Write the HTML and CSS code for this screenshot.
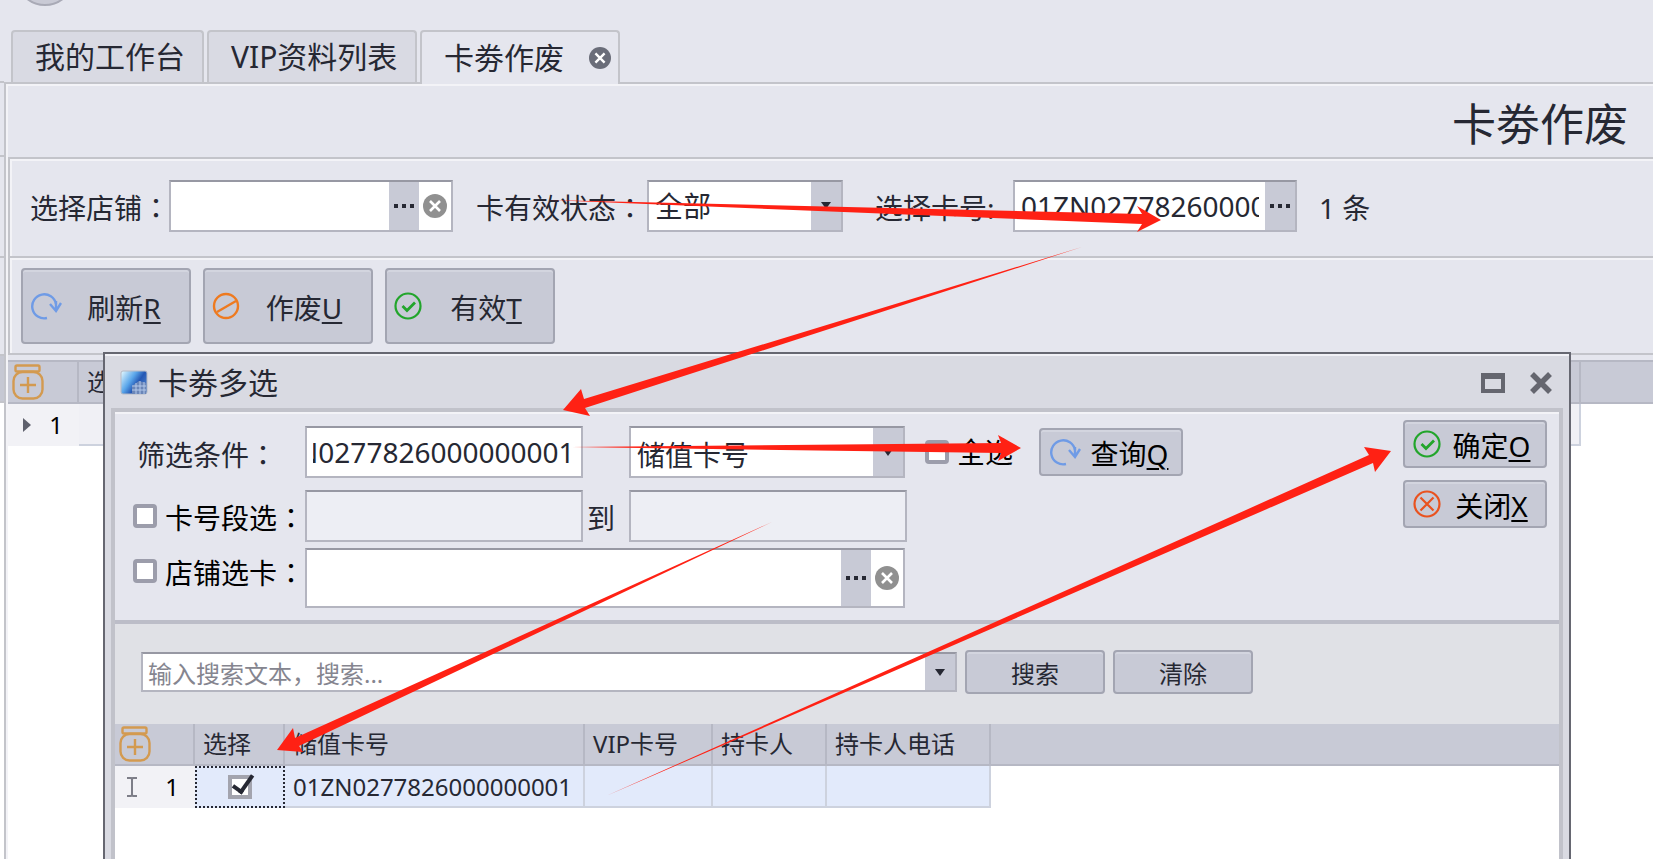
FILE: index.html
```html
<!DOCTYPE html>
<html lang="zh-CN">
  <head>
    <meta charset="UTF-8" />
    <meta name="viewport" content="width=device-width, initial-scale=1.0" />
    <title>卡劵作废</title>
    <link rel="stylesheet" href="styles.css">
  </head>
  <body>
    <!-- 公用图标 -->
    <svg class="defs" width="0" height="0">
      <symbol id="i-refresh" viewBox="0 0 32 28">
        <path d="M17 26A12 12 0 1 1 26 12" fill="none" stroke="#6f9be6" stroke-width="2.4" />
        <path d="M20 12l6 7 5-8M26 9v9" fill="none" stroke="#6f9be6" stroke-width="2.4" />
      </symbol>
      <symbol id="i-ban" viewBox="0 0 28 28">
        <circle cx="14" cy="14" r="12" fill="none" stroke="#ee7a20" stroke-width="2.4" />
        <path d="M5 20L24 9" stroke="#ee7a20" stroke-width="2.4" />
      </symbol>
      <symbol id="i-ok" viewBox="0 0 28 28">
        <circle cx="14" cy="14" r="12.5" fill="none" stroke="#22a52b" stroke-width="2.2" />
        <path d="M8.500 14l4.500 4.500 8-8" fill="none" stroke="#22a52b" stroke-width="2.8" />
      </symbol>
      <symbol id="i-no" viewBox="0 0 28 28">
        <circle cx="14" cy="14" r="12.500" fill="none" stroke="#e9521f" stroke-width="2.2" />
        <path d="M7.500 7.500l13 13M20.500 7.500l-13 13" stroke="#e9521f" stroke-width="2.2" />
      </symbol>
      <symbol id="i-clear" viewBox="0 0 24 24">
        <circle cx="12" cy="12" r="12" fill="currentColor" />
        <path d="M7 7l10 10M17 7L7 17" stroke="#fff" stroke-width="2.6" />
      </symbol>
      <symbol id="i-jar" viewBox="0 0 32 36">
        <g fill="none" stroke="#d39a50" stroke-width="2.4">
          <rect x="3.500" y="1.500" width="24" height="6" rx="1.500" />
          <rect x="1.500" y="8" width="29" height="26.500" rx="9" />
          <path d="M16 13v16M8 21h16" />
        </g>
      </symbol>
    </svg>

    <div class="page">
      <div class="gutter">
        <i class="g-tabs"></i><i class="g-title"></i><i class="g-filter"></i><i class="g-tools"></i><i class="g-head"></i><i class="g-body"></i>
      </div>

      <div class="main">
        <nav class="tabs">
          <span class="orb"></span>
          <button class="tab tab-home">我的工作台</button>
          <button class="tab tab-vip">VIP资料列表</button>
          <button class="tab tab-card active">卡劵作废
            <svg class="tab-close" width="22" height="22"><use href="#i-clear" /></svg>
          </button>
        </nav>

        <section class="pane">
          <h1 class="pane-title">卡劵作废</h1>

          <!-- 查询条件 -->
          <form class="filter">
            <label class="lb-shop" for="shop">选择店铺<span class="colon" lang="zh-TW">：</span></label>
            <div class="field f-shop">
              <input type="text" id="shop" />
              <button type="button" class="dots" aria-label="选择店铺"><i></i><i></i><i></i></button>
              <button type="button" class="clear" aria-label="清除店铺"><svg width="24" height="24"><use href="#i-clear" /></svg></button>
            </div>
            <label class="lb-state" for="state">卡有效状态<span class="colon" lang="zh-TW">：</span></label>
            <div class="field f-state">
              <select id="state"><option>全部</option></select><span class="drop"></span>
            </div>
            <label class="lb-card" for="card">选择卡号:</label>
            <div class="field f-card">
              <input type="text" id="card" value="01ZN0277826000000001" />
              <button type="button" class="dots" aria-label="选择卡号"><i></i><i></i><i></i></button>
            </div>
            <span class="count">1 条</span>
          </form>

          <div class="tools">
            <button class="btn big"><svg width="32" height="28"><use href="#i-refresh" /></svg><span>刷新<u>R</u></span></button>
            <button class="btn big"><svg width="28" height="28"><use href="#i-ban" /></svg><span>作废<u>U</u></span></button>
            <button class="btn big"><svg width="28" height="28"><use href="#i-ok" /></svg><span>有效<u>T</u></span></button>
          </div>

          <table class="grid main-grid">
            <thead>
              <tr>
                <th class="m-no"><svg width="32" height="36"><use href="#i-jar" /></svg></th>
                <th class="m-cell">选择</th>
                <th></th>
              </tr>
            </thead>
            <tbody>
              <tr>
                <td class="row-no"><div class="no"><i class="cursor"></i>1</div></td>
                <td class="m-val"></td>
                <td class="blank"></td>
              </tr>
            </tbody>
          </table>
        </section>
      </div>

      <!-- 卡劵多选窗口 -->
      <div class="dialog" role="dialog" aria-labelledby="dlg-title">
        <header class="dlg-bar">
          <svg width="28" height="26" viewBox="0 0 28 26">
            <defs>
              <linearGradient id="app" x1="0" y1="0" x2="1" y2="0.600">
                <stop offset="0" stop-color="#e8fbff" />
                <stop offset="0.450" stop-color="#5aa6ea" />
                <stop offset="0.700" stop-color="#2457b4" />
                <stop offset="1" stop-color="#4a7cc8" />
              </linearGradient>
            </defs>
            <rect x="1" y="1" width="26" height="23" rx="2" fill="url(#app)" stroke="#b5b9c4" />
            <path d="M12 24V16l7-5 7 2v11z" fill="#6b86b8" />
            <path d="M12 16h14M12 20h14M16 13v11M20 11v13M24 12v12" stroke="#b3c8ea" />
          </svg>
          <h2 id="dlg-title">卡劵多选</h2>
          <button class="win" aria-label="最大化"><svg width="24" height="20"><path d="M2 4h20v14H2z" fill="none" stroke="#65666f" stroke-width="4" /><path d="M0 3h24" stroke="#65666f" stroke-width="6" /></svg></button>
          <button class="win" aria-label="关闭"><svg width="24" height="22"><path d="M3 2l18 18M21 2L3 20" stroke="#65666f" stroke-width="5.500" /></svg></button>
        </header>

        <div class="dlg-body">
          <form class="cond">
            <div class="cond-rows">
              <div class="row">
                <label class="lb lb-key" for="key">筛选条件<span class="colon" lang="zh-TW">：</span></label>
                <div class="field f-key"><input type="text" id="key" value="01ZN0277826000000001" /></div>
                <div class="field f-kind">
                  <select id="kind" aria-label="条件类型"><option>储值卡号</option></select><span class="drop"></span>
                </div>
                <label class="check"><input type="checkbox" />全选</label>
                <button type="button" class="btn small"><svg width="32" height="28"><use href="#i-refresh" /></svg><span>查询<u>Q</u></span></button>
              </div>
              <div class="row">
                <label class="lb check"><input type="checkbox" /><span>卡号段选<span class="colon" lang="zh-TW">：</span></span></label>
                <div class="field f-key off"><input type="text" aria-label="起始卡号" disabled /></div>
                <span class="to">到</span>
                <div class="field f-to off"><input type="text" aria-label="结束卡号" disabled /></div>
              </div>
              <div class="row last">
                <label class="lb check"><input type="checkbox" /><span>店铺选卡<span class="colon" lang="zh-TW">：</span></span></label>
                <div class="field f-pick">
                  <input type="text" aria-label="店铺" />
                  <button type="button" class="dots" aria-label="选择店铺"><i></i><i></i><i></i></button>
                  <button type="button" class="clear" aria-label="清除店铺"><svg width="24" height="24"><use href="#i-clear" /></svg></button>
                </div>
              </div>
            </div>
            <div class="acts">
              <button type="button" class="btn small"><svg width="28" height="28"><use href="#i-ok" /></svg><span>确定<u>O</u></span></button>
              <button type="button" class="btn small"><svg width="28" height="28"><use href="#i-no" /></svg><span>关闭<u>X</u></span></button>
            </div>
          </form>

          <div class="search">
            <div class="field f-search">
              <input type="text" aria-label="搜索" placeholder="输入搜索文本，搜索..." />
              <span class="drop"></span>
            </div>
            <button class="btn mini">搜索</button>
            <button class="btn mini">清除</button>
          </div>

          <table class="grid card-grid">
            <thead>
              <tr>
                <th class="c-no"><svg width="32" height="36"><use href="#i-jar" /></svg></th>
                <th class="c-sel">选择</th>
                <th class="c-card">储值卡号</th>
                <th class="c-vip">VIP卡号</th>
                <th class="c-name">持卡人</th>
                <th class="c-tel">持卡人电话</th>
                <th></th>
              </tr>
            </thead>
            <tbody>
              <tr>
                <td class="row-no">
                  <div class="no">
                    <svg width="12" height="20"><path d="M1 1h4l1 1 1-1h4M6 2v16M1 19h4l1-1 1 1h4" fill="none" stroke="#7d7e88" stroke-width="2" /></svg>1
                  </div>
                </td>
                <td class="sel focus"><input type="checkbox" aria-label="选择" checked /></td>
                <td class="sel">01ZN0277826000000001</td>
                <td class="sel"></td>
                <td class="sel"></td>
                <td class="sel"></td>
                <td class="blank"></td>
              </tr>
            </tbody>
          </table>
        </div>
      </div>

      <!-- 操作步骤箭头 -->
      <svg class="arrows" width="1653" height="859">
        <path d="M548 200L1142 214 1137 206 1161 220 1137 232 1142 224z" />
        <path d="M1082 247L584 399 581 389 563 410 590 416 585 408z" />
        <path d="M572 447L1001 443 998 435 1021 448 998 461 1001 453z" />
        <path d="M772 522L295 738 293 728 277 750 303 752 299 746z" />
        <path d="M606 796L1369 455 1364 447 1391 451 1375 472 1373 463z" />
      </svg>
    </div>

    <script>
      // 筛选框光标停在末尾，只显示卡号后半段
      const key = document.getElementById("key");
      key.scrollLeft = key.scrollWidth;
    </script>
  </body>
</html>
```

FILE: styles.css
```css
* {
  box-sizing: border-box;
}
body {
  margin: 0;
  font-family: "Noto Sans", "Noto Sans CJK SC", sans-serif;
  font-size: 28px;
  line-height: 32px;
  color: #262833;
  background: #e5e6ee;
}
button,
input,
select {
  font: inherit;
  color: inherit;
  margin: 0;
}
button {
  padding: 0;
  border: 0;
  background: none;
}
.defs {
  position: absolute;
}
/* 冒号居中显示 */
.colon {
  font-family: "Noto Sans CJK TC", sans-serif;
  line-height: 1;
}
.page {
  position: relative;
  display: flex;
  height: 100vh;
  min-height: 820px;
  overflow: hidden;
}

/* 左侧窗口边缘 */
.gutter {
  width: 4px;
  flex: none;
  display: flex;
  flex-direction: column;
}
.gutter i {
  border-bottom: 2px solid #c3c4ca;
}
.g-tabs {
  height: 83px;
}
.g-title {
  height: 74px;
}
.g-filter {
  height: 101px;
}
.g-tools {
  height: 98px;
}
.g-head {
  height: 47px;
  background: #c6c8d3;
}
.gutter .g-body {
  flex: 1;
  background: #fff;
  border: 0;
}
.main {
  flex: 1;
  min-width: 0;
  display: flex;
  flex-direction: column;
}

/* 标签页 */
.tabs {
  position: relative;
  display: flex;
  align-items: flex-end;
  gap: 3px;
  height: 82px;
  padding-left: 7px;
  flex: none;
}
.orb {
  position: absolute;
  left: 11px;
  top: -54px;
  width: 60px;
  height: 60px;
  border: 2px solid #a9aab6;
  border-radius: 50%;
  background: #c9cad5;
}
.tab {
  height: 52px;
  padding-left: 22px;
  border: 2px solid #c3c4ca;
  border-bottom: 0;
  border-radius: 4px 4px 0 0;
  background: #d9dae3;
  font-size: 30px;
  text-align: left;
  white-space: nowrap;
}
.tab-home {
  width: 193px;
}
.tab-vip {
  width: 210px;
}
.tab-card {
  width: 200px;
}
.tab.active {
  position: relative;
  z-index: 1;
  height: 54px;
  margin-bottom: -2px;
  display: flex;
  align-items: center;
  justify-content: space-between;
  padding-right: 7px;
  background: #e5e6ee;
}
.tab-close {
  color: #6a6d79;
}

.pane {
  flex: 1;
  display: flex;
  flex-direction: column;
  border-top: 2px solid #c3c4ca;
  border-left: 2px solid #c3c4ca;
  box-shadow: inset 2px 2px #f3f3f7;
}
.pane-title {
  height: 73px;
  margin: 0;
  padding: 18px 25px 0 0;
  text-align: right;
  font-size: 44px;
  font-weight: 400;
  line-height: 44px;
}
.filter,
.tools {
  display: flex;
  margin-left: 2px;
  border-top: 2px solid #c3c4ca;
  border-left: 2px solid #c3c4ca;
  box-shadow: inset 2px 2px #f3f3f7;
}
.filter {
  height: 99px;
  align-items: center;
  padding: 0 0 4px 20px;
  white-space: nowrap;
}
.filter label,
.count {
  padding-top: 4px;
}
.lb-shop {
  width: 139px;
}
.lb-state {
  width: 171px;
  margin-left: 23px;
}
.lb-card {
  width: 138px;
  margin-left: 32px;
}
.count {
  margin-left: 22px;
}

/* 输入框 */
.field {
  display: flex;
  flex: none;
  height: 52px;
  border: 2px solid #b4b5c0;
  border-top-color: #9798a3;
  background: #fff;
}
.field input,
.field select {
  flex: 1;
  min-width: 0;
  padding: 0 6px;
  border: 0;
  outline: 0;
  background: none;
  appearance: none;
}
.f-shop {
  width: 284px;
}
.f-state {
  width: 196px;
}
.f-card {
  width: 284px;
}
.dots {
  width: 30px;
  display: flex;
  align-items: center;
  justify-content: center;
  gap: 4px;
  background: #c8cad6;
}
.dots i {
  width: 4px;
  height: 4px;
  background: #262833;
}
.clear {
  width: 32px;
  color: #909090;
}
.clear svg,
.btn svg,
.win svg,
.grid svg {
  display: block;
}
.clear svg {
  margin: 0 auto;
}
.drop {
  width: 30px;
  display: flex;
  align-items: center;
  justify-content: center;
  background: #c8cad6;
}
.drop::after {
  content: "";
  border: 5px solid transparent;
  border-top: 7px solid #262833;
  border-bottom: 0;
}

/* 按钮 */
.btn {
  display: flex;
  align-items: center;
  flex: none;
  border: 2px solid #a3a5b2;
  border-radius: 4px;
  background: #c8cad6;
  box-shadow: inset 0 2px #d3d5df;
  white-space: nowrap;
}
.btn u {
  text-underline-offset: 3px;
  text-decoration-thickness: 2px;
}
.btn span {
  flex: 1;
  padding: 4px 3px 0 0;
  text-align: center;
}
.btn.big {
  width: 170px;
  height: 76px;
  padding-left: 7px;
}
.btn.small {
  width: 144px;
  height: 48px;
  padding-left: 8px;
  color: #000;
}
.btn.mini {
  width: 140px;
  height: 44px;
  justify-content: center;
  padding-top: 4px;
  font-size: 24px;
}
.tools {
  gap: 12px;
  height: 99px;
  padding: 10px 0 0 11px;
  border-bottom: 2px solid #c3c4ca;
}

/* 表格 */
.grid {
  width: 100%;
  table-layout: fixed;
  border-collapse: separate;
  border-spacing: 0;
  font-size: 24px;
}
.grid th {
  height: 42px;
  padding: 0 0 0 8px;
  border-right: 2px solid #b6b8c4;
  border-bottom: 2px solid #b6b8c4;
  background: #c8cad6;
  font-weight: 400;
  text-align: left;
  white-space: nowrap;
}
.grid th:first-child {
  padding-left: 4px;
}
.grid th:last-child {
  border-right: 0;
}
.grid td {
  height: 42px;
  padding: 2px 0 0 8px;
  border-right: 2px solid #cdd2de;
  border-bottom: 2px solid #cdd2de;
}
.grid .row-no {
  padding: 2px 0 0;
  border-color: #f2f2f6;
  background: #f2f2f6;
  color: #000;
}
.grid .blank {
  border: 0;
}
.no {
  display: flex;
  align-items: center;
  justify-content: space-between;
  padding: 0 14px 0 11px;
}
.main-grid {
  margin: 5px 0 0 2px;
  width: auto;
  border-top: 2px solid #b6b8c4;
  background: #fff;
}
.pane::after {
  content: "";
  flex: 1;
  margin-left: 2px;
  background: #fff;
}
.m-no {
  width: 71px;
}
.m-cell {
  width: 1502px;
}
.grid .m-val {
  background: #f0f0f5;
}
.cursor {
  margin-left: 4px;
  border: 7px solid transparent;
  border-left: 8px solid #5f616d;
  border-right: 0;
}

/* 弹出窗口 */
.dialog {
  position: absolute;
  top: 352px;
  left: 103px;
  right: 82px;
  bottom: 0;
  display: flex;
  flex-direction: column;
  padding: 0 6px;
  border: 2px solid #666771;
  border-bottom: 0;
  background: #d9dae2;
  box-shadow: inset 0 2px #f1f1f6;
}
.dlg-bar {
  height: 54px;
  flex: none;
  display: flex;
  align-items: center;
  padding: 4px 10px 0 9px;
}
.dlg-bar h2 {
  flex: 1;
  margin: 0 0 0 10px;
  font-size: 30px;
  font-weight: 400;
}
.win {
  margin-left: 24px;
}
.dlg-body {
  flex: 1;
  border: 4px solid #c1c2ca;
  border-bottom: 0;
  background: #fff;
}
.cond {
  display: flex;
  justify-content: space-between;
  height: 212px;
  padding: 6px 12px 0 18px;
  border-bottom: 4px solid #bcbdc8;
  background: #e5e6ee;
  box-shadow: inset 0 2px #f3f3f7;
}
.cond-rows {
  padding-top: 8px;
}
.row {
  display: flex;
  align-items: center;
  height: 52px;
  margin-bottom: 12px;
}
.row.last {
  height: 60px;
  margin-top: -6px;
}
.lb {
  width: 172px;
  padding-left: 4px;
  white-space: nowrap;
}
.lb-key {
  padding-top: 6px;
}
.check {
  display: flex;
  align-items: center;
  gap: 8px;
  color: #000;
}
.lb.check {
  padding-left: 0;
}
.lb.check > span {
  padding-top: 4px;
}
.last .lb {
  margin-bottom: 14px;
}
.check input {
  flex: none;
  width: 24px;
  height: 24px;
  border: 4px solid #9c9dab;
  border-radius: 4px;
  background: #fff;
  appearance: none;
}
.f-key,
.f-to {
  width: 278px;
}
.f-kind {
  width: 276px;
  margin: 0 20px 0 46px;
}
.f-kind select {
  padding-top: 6px;
}
.f-pick {
  width: 600px;
  height: 60px;
}
.off {
  background: #edeef4;
}
.to {
  width: 46px;
  padding: 4px 0 0 4px;
}
.row .btn {
  margin-left: 26px;
}
.acts {
  display: flex;
  flex-direction: column;
  gap: 12px;
  padding-top: 2px;
}
.search {
  display: flex;
  align-items: center;
  gap: 8px;
  height: 100px;
  padding: 0 0 4px 26px;
  background: #e0e1e6;
  font-size: 24px;
}
.f-search {
  width: 816px;
  height: 40px;
}
.f-search input {
  padding: 4px 5px 0;
}
.f-search input::placeholder {
  color: #85858f;
  opacity: 1;
}
.c-no {
  width: 80px;
}
.c-sel {
  width: 90px;
}
.c-card {
  width: 300px;
}
.c-vip {
  width: 128px;
}
.c-name {
  width: 114px;
}
.c-tel {
  width: 164px;
}
.sel {
  background: #e2eafb;
}
.grid .focus {
  padding: 0;
  border: 2px dotted #262833;
  text-align: center;
}
.focus input {
  display: block;
  width: 24px;
  height: 24px;
  margin: 0 auto;
  border: 4px solid #a3a4ae;
  background: #fff;
  appearance: none;
}
.focus input::after {
  content: "";
  display: block;
  width: 8px;
  height: 18px;
  margin: -8px 0 0 5px;
  border: solid #262833;
  border-width: 0 4px 4px 0;
  transform: rotate(35deg);
}

.arrows {
  position: absolute;
  left: 0;
  top: 0;
  fill: #ff2114;
  pointer-events: none;
}
```
